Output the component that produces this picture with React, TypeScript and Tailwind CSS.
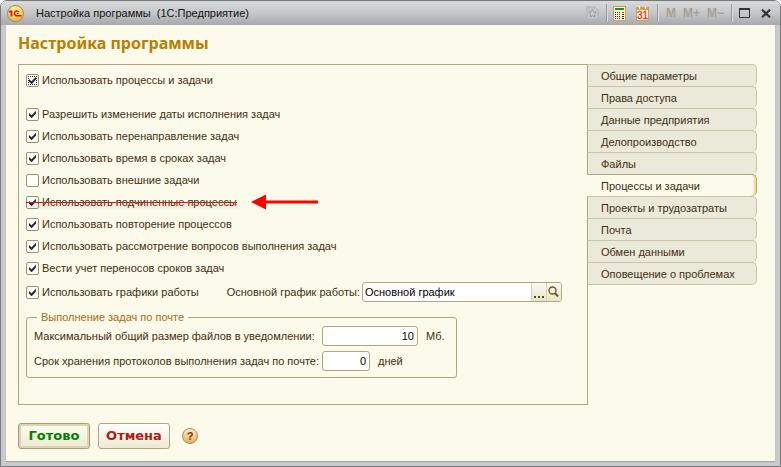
import { useState } from 'react';
import type { ReactNode } from 'react';

const tabs = [
  'Общие параметры',
  'Права доступа',
  'Данные предприятия',
  'Делопроизводство',
  'Файлы',
  'Процессы и задачи',
  'Проекты и трудозатраты',
  'Почта',
  'Обмен данными',
  'Оповещение о проблемах',
];

const options = [
  { id: 'dates', label: 'Разрешить изменение даты исполнения задач' },
  { id: 'redirect', label: 'Использовать перенаправление задач' },
  { id: 'time', label: 'Использовать время в сроках задач' },
  { id: 'external', label: 'Использовать внешние задачи' },
  { id: 'sub', label: 'Использовать подчиненные процессы', removed: true },
  { id: 'repeat', label: 'Использовать повторение процессов' },
  { id: 'questions', label: 'Использовать рассмотрение вопросов выполнения задач' },
  { id: 'transfers', label: 'Вести учет переносов сроков задач' },
];

const inputClass = 'h-5 rounded-[3px] border border-[#b0a67c] bg-white px-[3px] text-black outline-none';

type CheckProps = {
  label: string;
  checked: boolean;
  onChange: (v: boolean) => void;
  focused?: boolean;
};

function Check({ label, checked, onChange, focused }: CheckProps) {
  return (
    <label className="flex h-[22px] items-center gap-[3px] whitespace-nowrap">
      <span className="relative block size-[13px]">
        <input
          type="checkbox"
          checked={checked}
          onChange={(e) => onChange(e.target.checked)}
          className="block size-[13px] appearance-none rounded-[2px] border border-[#9c9168] bg-white"
        />
        {focused && <span className="pointer-events-none absolute inset-[2px] border border-dotted border-[#202060]" />}
        {checked && (
          <svg viewBox="0 0 13 13" className="pointer-events-none absolute inset-0 size-[13px]">
            <path d="M3 5 L5.5 7.2 L10 2.8 V5.6 L5.7 10.2 L3 7.8 Z" fill="#2b2b2b" />
          </svg>
        )}
      </span>
      {label}
    </label>
  );
}

function ToolButton({ title, children }: { title: string; children: ReactNode }) {
  return (
    <button type="button" aria-label={title} className="flex h-5 items-center justify-center">
      {children}
    </button>
  );
}

function Divider() {
  return <span className="h-[18px] w-[2px] border-l border-[#98999c] bg-[#d9dadb]" />;
}

function TitleBar() {
  return (
    <header className="flex h-[24px] items-center rounded-t-[5px] bg-linear-to-b from-[#d9dadb] via-[#c5c6c8] to-[#a8a9ad] pr-[9px] pl-[6px]">
      <svg viewBox="0 0 17 17" className="size-[17px]">
        <defs>
          <radialGradient id="logo" cx="45%" cy="35%">
            <stop offset="0" stopColor="#fff7a8" />
            <stop offset="0.7" stopColor="#ffe873" />
            <stop offset="1" stopColor="#f3bd4a" />
          </radialGradient>
        </defs>
        <circle cx="8.5" cy="8.5" r="8" fill="url(#logo)" stroke="#a9835c" />
        <path d="M2 6.5 H4.5 V11.5" fill="none" stroke="#e81010" strokeWidth="1.8" />
        <path d="M11.8 7.2 A2.4 2.4 0 1 0 9.4 10.8 H14.5" fill="none" stroke="#e81010" strokeWidth="1.6" />
        <path d="M9.6 8.6 H11.5" stroke="#e81010" strokeWidth="1" />
      </svg>
      <span className="ml-[12px] whitespace-pre text-[#111]">Настройка программы  (1С:Предприятие)</span>
      <div className="ml-auto flex items-center">
        <ToolButton title="Избранное">
          <svg viewBox="0 0 13 14" className="mr-[7px] h-[14px] w-[13px]">
            <path d="M1 1 H9 L12 4 V13 H1 Z" fill="#bfc8cf" stroke="#a6b4bd" />
            <path d="M6.5 3.5 L7.6 6 L10.2 6.3 L8.3 8.2 L8.8 11 L6.5 9.6 L4.2 11 L4.7 8.2 L2.8 6.3 L5.4 6 Z" fill="#cfcfc6" stroke="#a39c90" strokeWidth="1" />
          </svg>
        </ToolButton>
        <Divider />
        <ToolButton title="Калькулятор">
          <svg viewBox="0 0 13 15" className="mr-[5px] ml-[5px] h-[15px] w-[13px]">
            <rect x="0.5" y="0.5" width="12" height="14" fill="#fdf1d2" stroke="#c6a06a" />
            <rect x="2" y="2" width="9" height="2" fill="#1f8f1f" />
            {[6, 8, 10, 12].map((y) =>
              [2, 4, 6].map((x) => <rect key={`${x}-${y}`} x={x} y={y} width="1" height="1" fill="#3c2c18" />),
            )}
            <rect x="9" y="6" width="2" height="1" fill="#d8351c" />
            <rect x="9" y="8" width="2" height="1" fill="#3c2c18" />
            <rect x="9" y="10" width="2" height="1" fill="#3c2c18" />
            <rect x="9" y="12" width="2" height="1" fill="#3c2c18" />
          </svg>
        </ToolButton>
        <ToolButton title="Календарь">
          <svg viewBox="0 0 13 15" className="mr-[8px] ml-[5px] h-[15px] w-[13px]">
            <rect x="0.5" y="1.5" width="12" height="13" fill="#fff4dc" stroke="#c6a06a" />
            <rect x="1" y="1" width="11" height="3" fill="#d9963f" />
            <path d="M3.5 0 V3 M9.5 0 V3" stroke="#fff6df" strokeWidth="1.4" />
            <text x="6.5" y="13" textAnchor="middle" fontSize="10" fontFamily="Liberation Sans, sans-serif" fill="#e0301a" stroke="#e0301a" strokeWidth="0.3">31</text>
          </svg>
        </ToolButton>
        <Divider />
        <div className="flex gap-[7px] px-[7px] text-[12px] font-bold text-[#a99f99]">
          <ToolButton title="M">M</ToolButton>
          <ToolButton title="M+">M+</ToolButton>
          <ToolButton title="M-">M−</ToolButton>
        </div>
        <Divider />
        <ToolButton title="Развернуть">
          <svg viewBox="0 0 11 10" className="mr-[11px] ml-[6px] h-[10px] w-[11px]">
            <path d="M0.5 1 V9.5 H10.5 V1" fill="none" stroke="#333" />
            <path d="M0 1 H11" stroke="#333" strokeWidth="2" />
          </svg>
        </ToolButton>
        <ToolButton title="Закрыть">
          <svg viewBox="0 0 10 9" className="h-[9px] w-[10px]">
            <path d="M1 0.7 L9 8.3 M9 0.7 L1 8.3" stroke="#333" strokeWidth="2.2" />
          </svg>
        </ToolButton>
      </div>
    </header>
  );
}

export default function App() {
  const [activeTab, setActiveTab] = useState('Процессы и задачи');
  const [enabled, setEnabled] = useState(true);
  const [schedules, setSchedules] = useState(true);
  const [checked, setChecked] = useState<Set<string>>(new Set(options.map((o) => o.id).filter((id) => id !== 'external')));

  const toggle = (id: string, value: boolean) => {
    const next = new Set(checked);
    if (value) next.add(id);
    else next.delete(id);
    setChecked(next);
  };

  return (
    <div className="flex min-h-screen flex-col rounded-t-[7px] border border-[#77787a] bg-[#c9cacc] font-['Liberation_Sans',Arial,sans-serif] text-[11px] leading-[14px] text-[#3f2f10]">
      <TitleBar />
      <main className="mx-[5px] mb-[5px] flex grow flex-col bg-[#fcfaeb] px-[12px] pb-[12px] shadow-[0_1px_1px_#a5a6a6]">
        <h1 className="pt-[6px] pb-[9px] font-['Noto_Sans',sans-serif] text-[16px] leading-[24px] font-bold text-[#b87f00]">Настройка программы</h1>

        <div className="flex grow">
          <section className="grow border border-[#b0a67c] px-[7px] pt-1">
            <Check label="Использовать процессы и задачи" checked={enabled} onChange={setEnabled} focused />
            <div className="mt-3">
              {options.map((o) => (
                <div key={o.id} className="flex items-center">
                  <div className="relative">
                    <Check label={o.label} checked={checked.has(o.id)} onChange={(v) => toggle(o.id, v)} />
                    {o.removed && (
                      <span className="pointer-events-none absolute inset-x-0 top-[11px] h-px bg-[#e60f08] shadow-[2px_4px_3px_#00000030]" />
                    )}
                  </div>
                  {o.removed && (
                    <svg viewBox="0 0 68 16" className="ml-[14px] h-4 w-[68px]">
                      <path d="M0 8 L15 0.5 V6.5 H67 V9.5 H15 V15.5 Z" fill="#ff0000" />
                    </svg>
                  )}
                </div>
              ))}
            </div>

            <div className="mt-[2px] flex items-center">
              <Check label="Использовать графики работы" checked={schedules} onChange={setSchedules} />
              <label htmlFor="schedule" className="ml-[28px] whitespace-nowrap">Основной график работы:</label>
              <div className="ml-[2px] flex h-5 w-[200px] overflow-hidden rounded-[3px] border border-[#b0a67c] bg-white">
                <input id="schedule" defaultValue="Основной график" className="w-0 grow px-[2px] text-black outline-none" />
                <button type="button" aria-label="Выбрать" className="flex w-[15px] items-end justify-center border-l border-[#d8d1b0] bg-linear-to-b from-[#fbf9ee] to-[#e9e5ca] pb-[3px]">
                  <svg viewBox="0 0 10 2" className="h-[2px] w-[10px]" fill="#5f4a12">
                    <rect width="2" height="2" />
                    <rect x="4" width="2" height="2" />
                    <rect x="8" width="2" height="2" />
                  </svg>
                </button>
                <button type="button" aria-label="Открыть" className="flex w-[15px] items-center justify-center border-l border-[#d8d1b0] bg-linear-to-b from-[#fbf9ee] to-[#e9e5ca]">
                  <svg viewBox="0 0 11 12" className="h-[12px] w-[11px]" fill="none" stroke="#6b551c">
                    <circle cx="4.5" cy="4.5" r="3.5" strokeWidth="1.3" />
                    <path d="M7 7.2 L10 10.5" strokeWidth="2" />
                  </svg>
                </button>
              </div>
            </div>

            <fieldset className="mt-[7px] w-[431px] rounded-[3px] border border-[#b0a67c] px-[7px] pb-[6px]">
              <legend className="ml-[3px] px-1 text-[#aa6a10]">Выполнение задач по почте</legend>
              <div className="mt-[2px] flex items-center">
                <label htmlFor="size" className="w-[288px] whitespace-nowrap">Максимальный общий размер файлов в уведомлении:</label>
                <input id="size" defaultValue="10" className={`${inputClass} w-[96px] text-right`} />
                <span className="ml-2">Мб.</span>
              </div>
              <div className="mt-[5px] flex items-center">
                <label htmlFor="days" className="w-[288px] whitespace-nowrap">Срок хранения протоколов выполнения задач по почте:</label>
                <input id="days" defaultValue="0" className={`${inputClass} w-[48px] text-right`} />
                <span className="ml-2">дней</span>
              </div>
            </fieldset>
          </section>

          <nav className="-ml-px mr-[6px] flex w-[170px] shrink-0 flex-col">
            {tabs.map((tab) => (
              <button
                key={tab}
                type="button"
                onClick={() => setActiveTab(tab)}
                className={`h-[22px] rounded-r-[5px] border-t border-r text-left whitespace-nowrap last:h-[23px] last:border-b ${
                  tab === activeTab
                    ? 'border-[#b0a67c] bg-[#fcfaeb] pl-[14px] shadow-[inset_-2px_0_0_#f6d897]'
                    : 'border-l border-[#cbc4a4] border-l-[#b0a67c] bg-[#ebe9da] pl-[13px]'
                }`}
              >
                {tab}
              </button>
            ))}
          </nav>
        </div>

        <footer className="mt-[18px] flex items-center gap-2 font-['DejaVu_Sans',Verdana,sans-serif] text-[13px] font-bold">
          <button type="button" className="h-[26px] w-[72px] rounded-[3px] border border-[#a89d70] bg-linear-to-b from-[#fdfcf4] to-[#eceacf] text-[#008000] shadow-[inset_0_0_0_2px_#ddd5b2]">
            Готово
          </button>
          <button type="button" className="h-[26px] w-[72px] rounded-[3px] border border-[#b0a67c] bg-linear-to-b from-white to-[#eceacf] text-[#b01c1c]">
            Отмена
          </button>
          <button type="button" aria-label="Справка" className="ml-1 flex size-4 items-center justify-center rounded-full border border-[#a58b6b] bg-linear-to-b from-[#fbe6c4] to-[#f3b155] font-['Liberation_Sans',sans-serif] text-[11px] text-[#5e3c18]">
            ?
          </button>
        </footer>
      </main>
    </div>
  );
}
